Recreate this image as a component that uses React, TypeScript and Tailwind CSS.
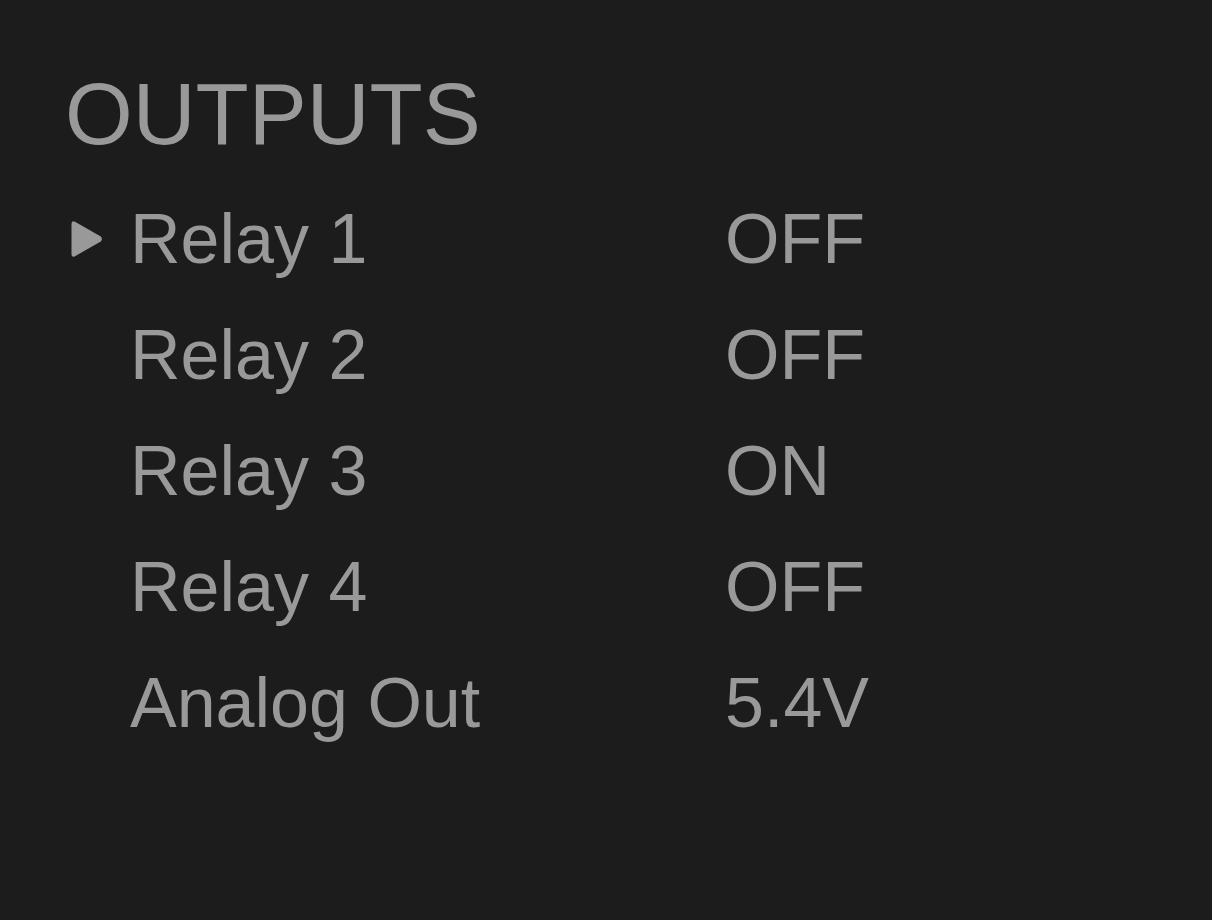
const rows = [
  { label: "Relay 1", value: "OFF", selected: true },
  { label: "Relay 2", value: "OFF" },
  { label: "Relay 3", value: "ON" },
  { label: "Relay 4", value: "OFF" },
  { label: "Analog Out", value: "5.4V" },
];

function Pointer() {
  return (
    <svg width="32" height="38" viewBox="0 0 32 38" className="ml-[9px]">
      <path
        d="M0.5 4 Q0.5 0 4 1.8 L29.8 16.4 Q32 19 29.8 21.6 L4 36.2 Q0.5 38 0.5 34 Z"
        fill="#999999"
      />
    </svg>
  );
}

export default function App() {
  return (
    <div
      className="w-[1212px] h-[920px] bg-[#1c1c1c] text-[#999999] pl-[62px] pt-[70px]"
      style={{ fontFamily: '"Liberation Sans", Arial, sans-serif' }}
    >
      <h1 className="ml-[3px] text-[87px] leading-[88px] font-normal">OUTPUTS</h1>

      <ul className="mt-[23px]">
        {rows.map((r) => (
          <li key={r.label} className="flex items-center h-[116px] text-[70px] leading-[116px]">
            <div className="w-[68px] flex items-center">{r.selected && <Pointer />}</div>
            <span className="w-[595px]">{r.label}</span>
            <span>{r.value}</span>
          </li>
        ))}
      </ul>
    </div>
  );
}
